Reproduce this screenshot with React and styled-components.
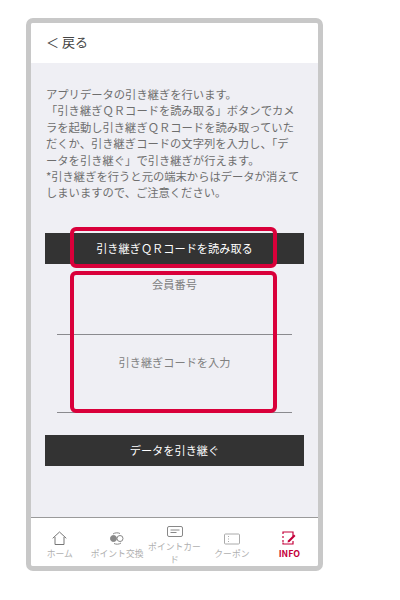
import styled, { createGlobalStyle } from "styled-components";

const GlobalStyle = createGlobalStyle`
  html, body {
    margin: 0;
    padding: 0;
    background: #fff;
    font-family: "Noto Sans CJK JP", "Noto Sans", sans-serif;
  }
`;

const Frame = styled.div`
  box-sizing: border-box;
  position: relative;
  width: 297px;
  height: 553px;
  margin: 18px 0 0 26px;
  border: 5px solid #c8c8c8;
  border-radius: 7px;
  display: flex;
  flex-direction: column;
  background: #efeff4;
  overflow: hidden;
`;

const Header = styled.div`
  box-sizing: border-box;
  height: 40px;
  flex: none;
  background: #fff;
  color: #444;
  font-size: 13px;
  display: flex;
  align-items: center;
  gap: 3px;
  padding: 0 0 3px 15px;
`;

const Content = styled.div`
  flex: 1;
  position: relative;
  display: flex;
  flex-direction: column;
  padding: 23px 14px 0;
`;

const Description = styled.p`
  margin: 0 0 0 1px;
  color: #6e6e6e;
  font-size: 11.3px;
  line-height: 16.4px;
  white-space: pre;
`;

const DarkButton = styled.div`
  height: 31px;
  margin-top: ${({ $gap }) => $gap}px;
  background: #333;
  color: #fff;
  font-size: 11.2px;
  display: flex;
  align-items: center;
  justify-content: center;
`;

const Field = styled.div`
  height: ${({ $height }) => $height}px;
  margin: 0 12px;
  border-bottom: 1px solid #8a8a8e;
  color: #808080;
  font-size: 11.2px;
  text-align: center;
  padding-top: ${({ $top }) => $top}px;
  box-sizing: border-box;
`;

const Highlight = styled.div`
  position: absolute;
  box-sizing: border-box;
  left: 39px;
  width: 207px;
  top: ${({ $top }) => $top}px;
  height: ${({ $height }) => $height}px;
  border: 4.5px solid #d9003a;
  border-radius: 6px;
`;

const TabBar = styled.div`
  height: 48px;
  flex: none;
  background: #fff;
  border-top: 1px solid #9a9a9a;
  display: flex;
`;

const Tab = styled.div`
  flex: 1;
  min-width: 0;
  display: flex;
  flex-direction: column;
  align-items: center;
  justify-content: ${({ $wrap }) => ($wrap ? "flex-start" : "flex-end")};
  padding-top: ${({ $wrap }) => ($wrap ? 8 : 0)}px;
  padding-bottom: ${({ $wrap }) => ($wrap ? 0 : 6)}px;
  gap: 2px;
  color: ${({ $active }) => ($active ? "#c4003a" : "#b0b0b0")};
  font-size: 8.8px;
  font-weight: ${({ $active }) => ($active ? 700 : 400)};
  line-height: 13px;
  text-align: center;
  overflow: hidden;
`;

const TabLabel = styled.span`
  width: 56px;
`;

const HomeIcon = () => (
  <svg width="15" height="14" viewBox="0 0 15 14" fill="none" stroke="#777" strokeWidth="1">
    <path d="M.7 7.3 7.5 1l6.8 6.3M3 6v7.5h9V6" />
  </svg>
);

const ExchangeIcon = () => (
  <svg width="16" height="13" viewBox="0 0 16 13" fill="none" stroke="#888" strokeWidth="1">
    <circle cx="4.5" cy="6.5" r="3" fill="#888" />
    <circle cx="11" cy="6.5" r="3" />
    <path d="M4 2C6 .5 9 .5 11 1.5M12 11c-2 1.5-5 1.5-7 .5" />
  </svg>
);

const CardIcon = () => (
  <svg width="16" height="12" viewBox="0 0 16 12" fill="none" stroke="#888" strokeWidth="1">
    <rect x="0.5" y="0.5" width="15" height="10" rx="1.5" />
    <path d="M3.5 4h9M3.5 6.5h6" />
  </svg>
);

const CouponIcon = () => (
  <svg width="16" height="12" viewBox="0 0 16 12" fill="none" stroke="#aaa" strokeWidth="1">
    <rect x="0.5" y="1" width="15" height="10" rx="1" />
    <path d="M4.5 3v1M4.5 5.5v1M4.5 8v1" />
  </svg>
);

const InfoIcon = () => (
  <svg width="16" height="14" viewBox="0 0 16 14" fill="none" stroke="#c4003a" strokeWidth="1.2">
    <path d="M12 5V1H2v2M2 5v2M2 9v2M2 11.5V13h10v-3" />
    <path d="M7 9.5l6-6L14.5 5l-6 6L6.5 11.5z" fill="#c4003a" stroke="none" />
  </svg>
);

const description = `アプリデータの引き継ぎを行います。
「引き継ぎＱＲコードを読み取る」ボタンでカメ
ラを起動し引き継ぎＱＲコードを読み取っていた
だくか、引き継ぎコードの文字列を入力し、「デ
ータを引き継ぐ」で引き継ぎが行えます。
*引き継ぎを行うと元の端末からはデータが消えて
しまいますので、ご注意ください。`;

const tabs = [
  { label: "ホーム", icon: <HomeIcon /> },
  { label: "ポイント交換", icon: <ExchangeIcon /> },
  { label: "ポイントカード", icon: <CardIcon />, wrap: true },
  { label: "クーポン", icon: <CouponIcon /> },
  { label: "INFO", icon: <InfoIcon />, active: true },
];

const App = () => {
  return (
    <>
      <GlobalStyle />
      <Frame>
        <Header>
          <span>＜</span>
          <span>戻る</span>
        </Header>
        <Content>
          <Description>{description}</Description>
          <DarkButton $gap={32}>引き継ぎＱＲコードを読み取る</DarkButton>
          <Field $height={71} $top={12}>会員番号</Field>
          <Field $height={78} $top={19}>引き継ぎコードを入力</Field>
          <DarkButton $gap={22}>データを引き継ぐ</DarkButton>
          {/* red callouts over the form */}
          <Highlight $top={164} $height={41} />
          <Highlight $top={208} $height={142} />
        </Content>
        <TabBar>
          {tabs.map((tab) => (
            <Tab key={tab.label} $active={tab.active} $wrap={tab.wrap}>
              {tab.icon}
              <TabLabel>{tab.label}</TabLabel>
            </Tab>
          ))}
        </TabBar>
      </Frame>
    </>
  );
};

export default App;
